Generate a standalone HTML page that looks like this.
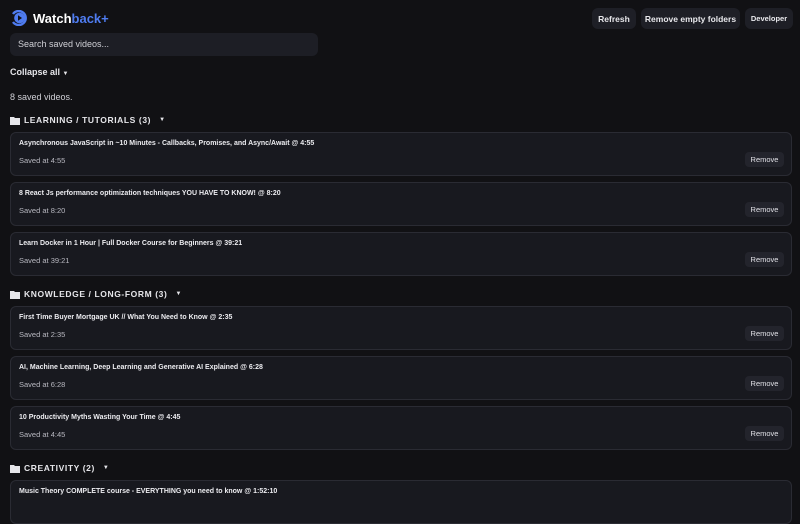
<!DOCTYPE html>
<html><head><meta charset="utf-8"><style>
*{box-sizing:border-box;margin:0;padding:0}
body{width:800px;height:500px;overflow:hidden;background:#111114;color:#e6e6ea;font-family:"Liberation Sans",sans-serif;position:relative}
.abs{position:absolute}
.logo{left:10px;top:10px;display:flex;align-items:center;font-weight:bold;font-size:13px;color:#fff}
.logo span{color:#4f7cf0}
.btn{position:absolute;top:8px;height:21px;background:#1e1f26;border-radius:6px;font-size:8.5px;font-weight:bold;color:#e8e8ec;display:flex;align-items:center;justify-content:center}
.search{left:10px;top:33px;width:308px;height:23px;background:#1d1e25;border-radius:6px;font-size:9px;color:#d0d0d6;padding:6px 8px}
.t{font-size:9px}
.folder{left:10px;font-size:8.5px;font-weight:bold;letter-spacing:.6px;display:flex;align-items:center;color:#e6e6ea}
.card{position:absolute;left:10px;width:782px;height:44px;background:#18191f;border:1px solid #2a2b33;border-radius:6px}
.card .ti{position:absolute;left:8px;top:7px;font-size:7px;font-weight:bold;color:#ececf0}
.card .s{position:absolute;left:8px;top:23px;font-size:7.5px;color:#b8b8c0}
.card .r{position:absolute;right:7px;top:19px;width:39px;height:15px;background:#23242c;border-radius:4px;font-size:7.5px;color:#e0e0e6;display:flex;align-items:center;justify-content:center}
</style></head><body>
<div class="abs logo"><svg width="18" height="16" viewBox="0 0 18 16" style="margin-right:5px"><path d="M3 4 A7 7 0 1 1 3 12" fill="none" stroke="#4f7cf0" stroke-width="2.4"/><circle cx="9.5" cy="8" r="5.3" fill="#4f7cf0"/><path d="M8 5.3 L12 8 L8 10.7Z" fill="#111114"/></svg>Watch<span>back+</span></div>
<div class="btn" style="left:592px;width:44px">Refresh</div>
<div class="btn" style="left:641px;width:99px">Remove empty folders</div>
<div class="btn" style="left:745px;width:48px;font-size:7.5px">Developer</div>
<div class="abs search">Search saved videos...</div>
<div class="abs t" style="left:10px;top:67px;font-weight:bold">Collapse all <span style="font-size:6px">▼</span></div>
<div class="abs t" style="left:10px;top:92px;color:#cfcfd5">8 saved videos.</div>

<div class="abs folder" style="top:115px"><svg width="10" height="9" viewBox="0 0 10 9" style="margin-right:4px"><path d="M0 1h4l1 1h5v7H0z" fill="#e6e6ea"/></svg>LEARNING / TUTORIALS (3) <span style="font-size:6px;margin-left:8px">▼</span></div>
<div class="card" style="top:132px"><div class="ti">Asynchronous JavaScript in ~10 Minutes - Callbacks, Promises, and Async/Await @ 4:55</div><div class="s">Saved at 4:55</div><div class="r">Remove</div></div>
<div class="card" style="top:182px"><div class="ti">8 React Js performance optimization techniques YOU HAVE TO KNOW! @ 8:20</div><div class="s">Saved at 8:20</div><div class="r">Remove</div></div>
<div class="card" style="top:232px"><div class="ti">Learn Docker in 1 Hour | Full Docker Course for Beginners @ 39:21</div><div class="s">Saved at 39:21</div><div class="r">Remove</div></div>

<div class="abs folder" style="top:289px"><svg width="10" height="9" viewBox="0 0 10 9" style="margin-right:4px"><path d="M0 1h4l1 1h5v7H0z" fill="#e6e6ea"/></svg>KNOWLEDGE / LONG-FORM (3) <span style="font-size:6px;margin-left:8px">▼</span></div>
<div class="card" style="top:306px"><div class="ti">First Time Buyer Mortgage UK // What You Need to Know @ 2:35</div><div class="s">Saved at 2:35</div><div class="r">Remove</div></div>
<div class="card" style="top:356px"><div class="ti">AI, Machine Learning, Deep Learning and Generative AI Explained @ 6:28</div><div class="s">Saved at 6:28</div><div class="r">Remove</div></div>
<div class="card" style="top:406px"><div class="ti">10 Productivity Myths Wasting Your Time @ 4:45</div><div class="s">Saved at 4:45</div><div class="r">Remove</div></div>

<div class="abs folder" style="top:463px"><svg width="10" height="9" viewBox="0 0 10 9" style="margin-right:4px"><path d="M0 1h4l1 1h5v7H0z" fill="#e6e6ea"/></svg>CREATIVITY (2) <span style="font-size:6px;margin-left:8px">▼</span></div>
<div class="card" style="top:480px"><div class="ti">Music Theory COMPLETE course - EVERYTHING you need to know @ 1:52:10</div></div>
</body></html>
